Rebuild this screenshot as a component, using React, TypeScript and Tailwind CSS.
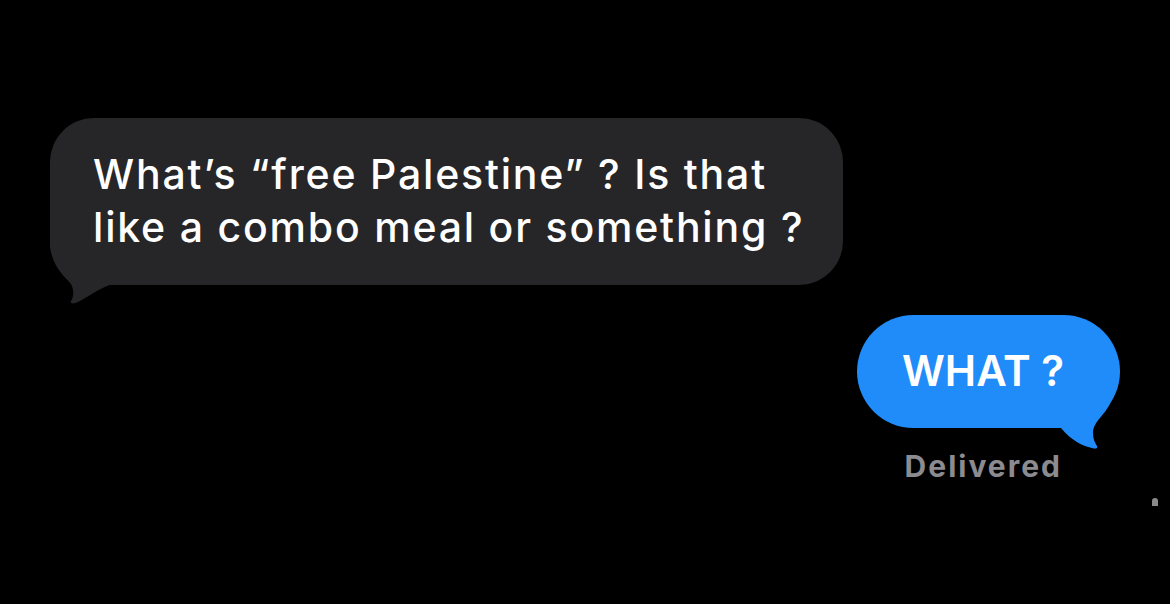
import React from "react";

const font = { fontFamily: "Inter, 'Noto Sans', 'Liberation Sans', sans-serif" };

function IncomingBubble({ children }: { children: React.ReactNode }) {
  return (
    <div className="relative w-[793px] h-[167px] rounded-[44px] bg-[#262628] pl-[43px] pt-[30px]">
      <svg
        className="absolute left-0 top-0 overflow-visible"
        width="80"
        height="190"
        viewBox="0 0 80 190"
      >
        <path
          d="M0 100 L0 128 C2 148 14 158 21 166 C24 172 24 178 21 183 C20 186 24 186 28 184 C38 179 48 171 62 166 L62 100 Z"
          fill="#262628"
        />
      </svg>
      <p className="relative text-[41px] leading-[53px] font-medium text-white tracking-[1.8px]">
        {children}
      </p>
    </div>
  );
}

function OutgoingBubble({ children }: { children: React.ReactNode }) {
  return (
    <div className="relative w-[263px] h-[113px] rounded-full bg-[#1f8cfa] flex items-center pl-[45px]">
      <svg
        className="absolute left-0 top-0 overflow-visible"
        width="263"
        height="140"
        viewBox="0 0 263 140"
      >
        <path
          d="M200 100 L254 86 C249 100 236 106 236 118 C236 124 238 128 240 131 C241 134 238 134 235 133 C225 131 214 125 204 113 Z"
          fill="#1f8cfa"
        />
      </svg>
      <span className="relative text-[42px] font-semibold text-white tracking-[0px] -mt-[2px]">
        {children}
      </span>
    </div>
  );
}

export default function App() {
  return (
    <div className="w-full h-[604px] bg-black overflow-hidden flex flex-col" style={font}>
      <div className="pt-[118px] pl-[50px]">
        <IncomingBubble>
          What’s “free Palestine” ? Is that
          <br />
          like a combo meal or something ?
        </IncomingBubble>
      </div>
      <div className="flex justify-end pr-[50px] mt-[30px]">
        <OutgoingBubble>WHAT ?</OutgoingBubble>
      </div>
      <div className="flex justify-end pr-[108px] mt-[18px]">
        <span className="text-[30px] leading-[40px] font-bold text-[#8b8b90] tracking-[2px]">Delivered</span>
      </div>
      <div className="flex justify-end pr-[12px] mt-[12px]">
        <div className="w-[6px] h-[8px] rounded-t-full bg-[#8a8a8a]" />
      </div>
    </div>
  );
}
